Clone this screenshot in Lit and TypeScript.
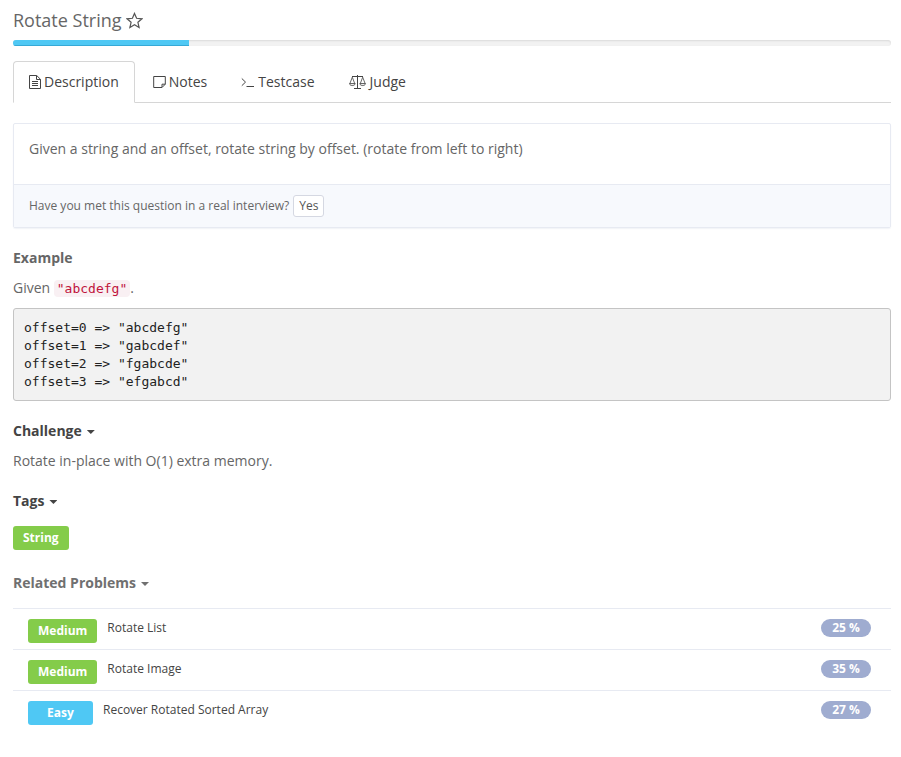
import { LitElement, html, css, svg } from "lit";
import { customElement, state } from "lit/decorators.js";
import { classMap } from "lit/directives/class-map.js";

const icons = {
  description: svg`<svg class="icon" width="12" height="14" viewBox="0 0 12 14" aria-hidden="true">
    <path d="M.5.5h7.2l3.8 3.8v9.2H.5z M7.5.5v4h4 M3 6.5h6 M3 8.5h6 M3 10.5h6"/></svg>`,
  notes: svg`<svg class="icon" width="13" height="14" viewBox="0 0 13 14" aria-hidden="true">
    <path d="M.7 1.5h11.6v7.7l-3.3 3.3H.7z M9 12.3V9.2h3.2"/></svg>`,
  testcase: svg`<svg class="icon" width="14" height="14" viewBox="0 0 14 14" aria-hidden="true">
    <path d="M.8 3.5l3.7 3.6-3.7 3.6 M5.5 11.5H13"/></svg>`,
  judge: svg`<svg class="icon" width="18" height="14" viewBox="0 0 18 14" aria-hidden="true">
    <path d="M3 1.5h11 M8.5 0v13 M5 13.5h7"/>
    <path stroke-width=".8" d="M3.3 2.2L.9 8.5 M3.3 2.2l2.4 6.3 M13.7 2.2l-2.4 6.3 M13.7 2.2l2.4 6.3"/>
    <path stroke-width=".9" d="M.5 8.6h5.7c-.4 2.6-5.3 2.6-5.7 0z M10.8 8.6h5.7c-.4 2.6-5.3 2.6-5.7 0z"/></svg>`,
};

type TabId = keyof typeof icons;

const tabs: { id: TabId; label: string }[] = [
  { id: "description", label: "Description" },
  { id: "notes", label: "Notes" },
  { id: "testcase", label: "Testcase" },
  { id: "judge", label: "Judge" },
];

const related = [
  { level: "Medium", title: "Rotate List", rate: 25 },
  { level: "Medium", title: "Rotate Image", rate: 35 },
  { level: "Easy", title: "Recover Rotated Sorted Array", rate: 27 },
];

const example = `offset=0 => "abcdefg"
offset=1 => "gabcdef"
offset=2 => "fgabcde"
offset=3 => "efgabcd"`;

@customElement("app-root")
export class AppRoot extends LitElement {
  @state() private active: TabId = "description";
  @state() private closed: string[] = [];

  static styles = css`
    :host {
      display: block;
      padding: 10px 10px 24px 13px;
      background: #fff;
      color: #666;
      font: 14px/20px "Open Sans", sans-serif;
    }
    * { box-sizing: border-box; }
    h1, h2, p, pre, ul { margin: 0; padding: 0; }
    button { font: inherit; color: inherit; margin: 0; cursor: pointer; }
    a { color: #444; text-decoration: none; }
    .title { display: flex; align-items: center; gap: 4px; font-size: 18px; line-height: 20px; font-weight: 400; }
    .star { display: flex; padding: 0; border: 0; background: none; color: #555; }
    .progress {
      height: 6px; margin-top: 10px; border-radius: 3px; overflow: hidden;
      background: #f2f2f2; box-shadow: inset 0 1px 2px rgba(0, 0, 0, 0.1);
    }
    .bar { height: 100%; background: #4fc8f4; box-shadow: inset 0 -1px 0 #36a9d6; }
    .tabs { display: flex; gap: 2px; margin-top: 15px; border-bottom: 1px solid #d6d6d6; }
    .tab {
      display: flex; align-items: center; gap: 3px; height: 42px; margin-bottom: -1px;
      padding: 0 15px; border: 1px solid transparent; border-radius: 4px 4px 0 0; color: #444;
    }
    .tab.active { border-color: #d6d6d6; border-bottom-color: #fff; background: #fff; }
    .icon { flex: none; fill: none; stroke: currentColor; stroke-width: 1; }
    .card {
      margin-top: 20px; border: 1px solid #e7eaf2; border-radius: 2px;
      box-shadow: 0 1px 1px rgba(90, 110, 160, 0.08);
    }
    .question { padding: 15px 15px 25px; }
    .met {
      display: flex; align-items: center; gap: 4px; padding: 10px 15px;
      border-top: 1px solid #e7eaf2; background: #f7f9fd; font-size: 12px;
    }
    .yes {
      height: 22px; padding: 0 5px; line-height: 20px; border: 1px solid #d5d8e2; border-radius: 3px;
      background: #fff; color: #555;
    }
    h2 { font-size: 14px; line-height: 20px; font-weight: 700; }
    .section { margin-top: 20px; }
    .text { margin-top: 10px; }
    code, pre { font: 13px/18px "DejaVu Sans Mono", monospace; }
    code { padding: 1px 3px; border-radius: 4px; background: #f9f0f3; color: #c0143c; }
    pre {
      margin-top: 10px; padding: 10px 10px 9px; border: 1px solid #c4c4c4; border-radius: 3px;
      background: #f2f2f2; color: #222; overflow-x: auto;
    }
    .toggle { display: flex; align-items: center; gap: 5px; padding: 0; border: 0; background: none; color: #444; }
    .toggle.muted { color: #707070; }
    .caret { width: 8px; height: 4px; margin-top: 2px; background: currentColor; clip-path: polygon(0 0, 100% 0, 50% 100%); }
    .tags { display: flex; margin: 15px 0 23px; }
    .badge {
      height: 24px; padding: 0 10px; border-radius: 3px; background: #84cc4a;
      color: #fff; font-size: 12px; line-height: 24px; font-weight: 700; text-align: center;
    }
    .easy { min-width: 65px; background: #4fc8f4; }
    .list { margin-top: 15px; list-style: none; }
    .row {
      display: flex; align-items: flex-start; gap: 10px; height: 41px; padding: 10px 20px 0 15px;
      border-top: 1px solid #e7eaf2; font-size: 12px;
    }
    .link { flex: 1; line-height: 18px; }
    .rate {
      width: 50px; height: 18px; border-radius: 9px; background: #9facd0; color: #fff;
      line-height: 18px; font-weight: 700; text-align: center;
    }
  `;

  private flip(name: string) {
    this.closed = this.closed.includes(name)
      ? this.closed.filter((n) => n !== name)
      : [...this.closed, name];
  }

  private section(name: string, body: unknown, muted = false) {
    const open = !this.closed.includes(name);
    return html`<section class="section">
      <h2>
        <button class=${classMap({ toggle: true, muted })} aria-expanded=${String(open)} @click=${() => this.flip(name)}>
          ${name}<span class="caret"></span>
        </button>
      </h2>
      ${open ? body : ""}
    </section>`;
  }

  render() {
    return html`
      <h1 class="title">
        Rotate String
        <button class="star" aria-label="Add to favourites">
          <svg class="icon" width="17" height="17" viewBox="0 0 17 17" aria-hidden="true">
            <path stroke-width="1.2" d="M8.5 1.4l2.1 4.9 5.3.5-4 3.5 1.2 5.2-4.6-2.8-4.6 2.8 1.2-5.2-4-3.5 5.3-.5z"/>
          </svg>
        </button>
      </h1>
      <div class="progress" role="progressbar" aria-label="Progress" aria-valuenow="20">
        <div class="bar" style="width: 20%"></div>
      </div>
      <nav class="tabs">
        ${tabs.map(
          (t) => html`<a class=${classMap({ tab: true, active: t.id === this.active })} href="#${t.id}"
            @click=${() => (this.active = t.id)}>${icons[t.id]}<span>${t.label}</span></a>`
        )}
      </nav>
      <main>
        <div class="card">
          <p class="question">Given a string and an offset, rotate string by offset. (rotate from left to right)</p>
          <div class="met">
            <span>Have you met this question in a real interview?</span>
            <button class="yes">Yes</button>
          </div>
        </div>
        <section class="section">
          <h2>Example</h2>
          <p class="text">Given <code>"abcdefg"</code>.</p>
          <pre>${example}</pre>
        </section>
        ${this.section("Challenge", html`<p class="text">Rotate in-place with O(1) extra memory.</p>`)}
        ${this.section("Tags", html`<div class="tags"><a class="badge" href="#string">String</a></div>`)}
        ${this.section(
          "Related Problems",
          html`<ul class="list">
            ${related.map(
              (p) => html`<li class="row">
                <span class=${classMap({ badge: true, easy: p.level === "Easy" })}>${p.level}</span>
                <a class="link" href="#problem">${p.title}</a>
                <span class="rate">${p.rate} %</span>
              </li>`
            )}
          </ul>`,
          true
        )}
      </main>
    `;
  }
}
